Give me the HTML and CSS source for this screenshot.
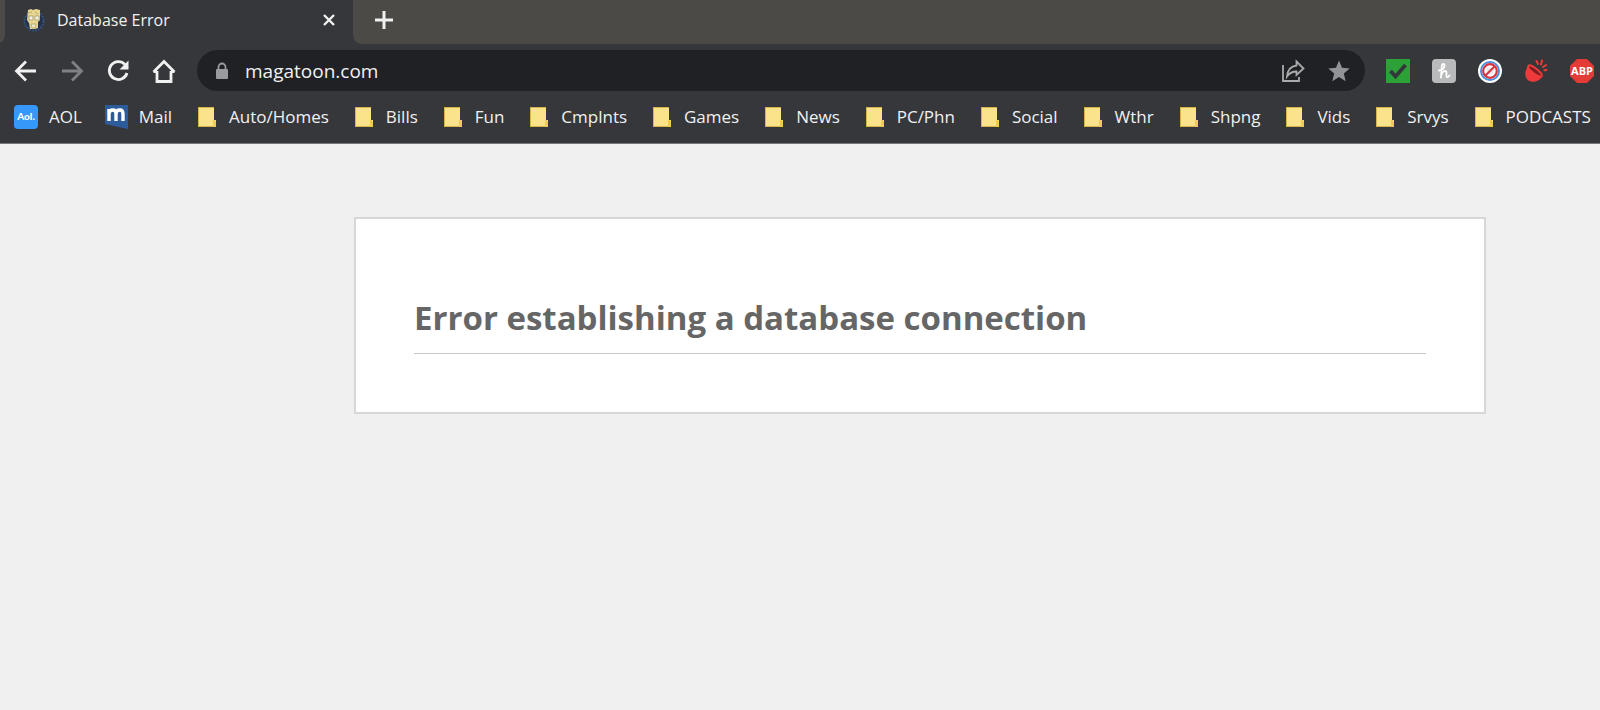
FILE: index.html
```html
<!DOCTYPE html>
<html lang="en">
<head>
  <meta charset="UTF-8">
  <meta name="viewport" content="width=device-width, initial-scale=1.0">
  <title>Database Error</title>
  <link rel="stylesheet" href="styles.css">
</head>
<body>
  <svg class="sprite" aria-hidden="true">
    <symbol id="folder" viewBox="0 0 24 24">
      <path d="M4 2h16v13h2v7H4z" fill="#fbe38c"/>
      <path d="M4 2h16v1H5v18h15v1H4z" fill="#d8b24a"/>
      <path d="M19 15h1q2 0 2 2v5h-3z" fill="#efcb55"/>
    </symbol>
  </svg>

  <header class="browser">
    <div class="tab-strip">
      <div class="tab">
        <svg class="favicon" viewBox="0 0 24 24" aria-hidden="true">
          <circle cx="12" cy="13" r="9.500" fill="#25324a" stroke="#34527f" stroke-width="2" stroke-dasharray="2 1"/>
          <path d="M6 2l3-1 2 1 3-1 4 1v10l-2 2v6l-3 1H8l-1-6-2-3z" fill="#e6d690"/>
          <path d="M7 8h4v4H7zM13 8h4v4h-4z" fill="#f5f1dc" stroke="#8b8464" stroke-width=".6"/>
          <path d="M9 16h5l-1 4h-3zM6 5l4-1M13 4l3 2" fill="#eee6ce" stroke="#a99b65" stroke-width=".7"/>
        </svg>
        <span class="tab-title">Database Error</span>
        <button class="tab-close" type="button" aria-label="Close tab">
          <svg viewBox="0 0 14 14"><path d="M2 2l10 10M12 2L2 12"/></svg>
        </button>
      </div>
      <button class="new-tab" type="button" aria-label="New tab">
        <svg viewBox="0 0 18 18"><path d="M9 0v18M0 9h18"/></svg>
      </button>
    </div>

    <div class="toolbar">
      <nav class="nav-buttons" aria-label="Browser navigation">
        <button type="button" aria-label="Back">
          <svg viewBox="0 0 24 24"><path d="M22 12H3M12 2.500L2.500 12l9.500 9.500"/></svg>
        </button>
        <button class="disabled" type="button" aria-label="Forward" disabled>
          <svg viewBox="0 0 24 24"><path d="M2 12H21M12 2.500l9.500 9.500-9.500 9.500"/></svg>
        </button>
        <button type="button" aria-label="Reload">
          <svg viewBox="0 0 24 24"><path d="M19 5.500A9 9 0 1 0 21 14"/><path class="solid" d="M22.500 1.500v9h-9z"/></svg>
        </button>
        <button type="button" aria-label="Home">
          <svg viewBox="0 0 24 24"><path d="M5 12v10.500h14V12M1.500 13L12 2.500 22.500 13M5 12.500H1.500M19 12.500h3.500"/></svg>
        </button>
      </nav>

      <div class="omnibox">
        <svg class="lock" viewBox="0 0 14 18" aria-hidden="true">
          <path d="M3.500 8V5a3.500 3.500 0 0 1 7 0v3" fill="none" stroke="#9a9b9e" stroke-width="1.800"/>
          <rect x="1" y="7" width="12" height="10" rx="1" fill="#9a9b9e"/>
        </svg>
        <input class="url" type="text" value="magatoon.com" aria-label="Address bar" spellcheck="false">
        <button type="button" aria-label="Share this page">
          <svg viewBox="0 0 24 24"><path class="share" d="M2 6v16h16v-4M15.500 2.500L22.500 9.500l-7 6.500V12.500q-6 0-9.500 5 1-10 9.500-11z"/></svg>
        </button>
        <button type="button" aria-label="Bookmark this page">
          <svg viewBox="0 0 24 24"><path class="star" d="M12 1.500l3 7.300 7.700.6-5.900 5.100 1.900 7.700-6.700-4.100-6.700 4.100 1.900-7.700-5.900-5.100 7.700-.6z"/></svg>
        </button>
      </div>

      <div class="extensions">
        <button type="button" aria-label="Site safety">
          <svg viewBox="0 0 24 24"><path d="M0 0h24v24H0z" fill="#2ba136"/><path d="M4.500 12l5 5.500L19.500 6" fill="none" stroke="#34373a" stroke-width="3.800"/></svg>
        </button>
        <button type="button" aria-label="Honey">
          <svg viewBox="0 0 24 24"><rect width="24" height="24" rx="4" fill="#b9babb"/><path d="M7 11.500q5.500-1 5.500-5 0-1.500-1.200-1.500-1.300 0-1.600 3L9 18.500M9.300 15.500q2-4 4-3.700 1.500.3 1.200 3.200t.5 3q1 .5 2.500-1.500" fill="none" stroke="#fff" stroke-width="1.800" stroke-linecap="round"/></svg>
        </button>
        <button type="button" aria-label="Popup blocker">
          <svg viewBox="0 0 24 24"><circle cx="12" cy="12" r="12" fill="#fff"/><circle cx="12" cy="12" r="9" fill="none" stroke="#4b8fd9" stroke-width="2"/><circle cx="12" cy="12" r="6.800" fill="none" stroke="#d73640" stroke-width="2.200"/><path d="M8.500 15.500V11q0-2.500 2.500-2.500h4.500V13q0 2.500-2.500 2.500z" fill="#e9e9ee"/><path d="M7.500 16.500l9-9" stroke="#d73640" stroke-width="2.200"/></svg>
        </button>
        <button type="button" aria-label="Coupons">
          <svg viewBox="0 0 24 24"><path d="M4 7Q0 13 2 18.500q3 5.500 9.500 4 5.500-1.500 6.500-6z" fill="#ee3a3a"/><ellipse cx="11" cy="12" rx="8.500" ry="2.600" transform="rotate(38 11 12)" fill="#7c1e22" stroke="#ee3a3a" stroke-width="1.800"/><path d="M12.500 2l1.500 3M18 1.500l-1 4M22 6l-3 2M22.500 11l-2 .3" stroke="#ee3a3a" stroke-width="2" stroke-linecap="round"/></svg>
        </button>
        <button type="button" aria-label="Adblock Plus">
          <svg viewBox="0 0 24 24"><path d="M7 0h10l7 7v10l-7 7H7l-7-7V7z" fill="#e33b36"/><text x="12" y="16" class="abp">ABP</text></svg>
        </button>
      </div>
    </div>

    <nav class="bookmarks" aria-label="Bookmarks">
      <a href="#"><svg viewBox="0 0 24 24"><rect width="24" height="24" rx="4" fill="#3699fa"/><text x="12" y="15" class="aol">Aol.</text></svg>AOL</a>
      <a href="#"><svg viewBox="0 0 24 24"><path d="M1 0h23v24L1 19z" fill="#2d5c9d"/><path d="M5 16V4M5 9q0-4 4-4 3 0 3 4v7M12 9q0-4 4-4 3 0 3 4v7" fill="none" stroke="#fff" stroke-width="3.400"/></svg>Mail</a>
      <a href="#"><svg><use href="#folder"/></svg>Auto/Homes</a>
      <a href="#"><svg><use href="#folder"/></svg>Bills</a>
      <a href="#"><svg><use href="#folder"/></svg>Fun</a>
      <a href="#"><svg><use href="#folder"/></svg>Cmplnts</a>
      <a href="#"><svg><use href="#folder"/></svg>Games</a>
      <a href="#"><svg><use href="#folder"/></svg>News</a>
      <a href="#"><svg><use href="#folder"/></svg>PC/Phn</a>
      <a href="#"><svg><use href="#folder"/></svg>Social</a>
      <a href="#"><svg><use href="#folder"/></svg>Wthr</a>
      <a href="#"><svg><use href="#folder"/></svg>Shpng</a>
      <a href="#"><svg><use href="#folder"/></svg>Vids</a>
      <a href="#"><svg><use href="#folder"/></svg>Srvys</a>
      <a href="#"><svg><use href="#folder"/></svg>PODCASTS</a>
    </nav>
  </header>

  <main class="error-page">
    <h1>Error establishing a database connection</h1>
  </main>
</body>
</html>
```
FILE: styles.css
```css
:root {
  --frame: #4b4a47;
  --toolbar: #36373a;
  --omnibox: #202124;
  --light: #f1f1f1;
  --page: #f0f0f0;
}

* {
  box-sizing: border-box;
}

body {
  margin: 0;
  background: var(--page);
  font-family: "Open Sans", "Segoe UI", sans-serif;
}

button {
  display: flex;
  align-items: center;
  justify-content: center;
  padding: 0;
  border: 0;
  background: none;
  color: var(--light);
  cursor: pointer;
}

svg {
  display: block;
  flex: none;
}

.sprite {
  display: none;
}

/* tab strip */
.browser {
  background: var(--toolbar);
  border-bottom: 1px solid #77787a;
}

.tab-strip {
  display: flex;
  height: 44px;
  padding-left: 5px;
  background: var(--frame);
}

.tab {
  position: relative;
  display: flex;
  align-items: center;
  width: 348px;
  height: 44px;
  padding: 0 17px 4px 17px;
  background: var(--toolbar);
}

/* curved feet of the active tab */
.tab::before,
.tab::after {
  content: "";
  position: absolute;
  bottom: 0;
  width: 8px;
  height: 8px;
}

.tab::before {
  right: 100%;
  background: radial-gradient(circle at 0 0, var(--frame) 7px, var(--toolbar) 8px);
}

.tab::after {
  left: 100%;
  background: radial-gradient(circle at 100% 0, var(--frame) 7px, var(--toolbar) 8px);
}

.favicon {
  width: 24px;
  height: 24px;
  margin-right: 11px;
}

.tab-title {
  flex: 1;
  color: var(--light);
  font-size: 16px;
}

.tab-close svg {
  width: 14px;
  height: 14px;
}

.new-tab {
  width: 62px;
  padding-bottom: 4px;
}

.new-tab svg {
  width: 18px;
  height: 18px;
}

.tab-close path,
.new-tab path {
  fill: none;
  stroke: currentColor;
  stroke-width: 2.4;
}

.new-tab path {
  stroke-width: 3;
}

/* toolbar */
.toolbar {
  display: flex;
  align-items: center;
  gap: 10px;
  padding: 6px 0 6px 3px;
}

.nav-buttons {
  display: flex;
}

.nav-buttons button {
  width: 46px;
  height: 41px;
}

.nav-buttons svg,
.omnibox button svg,
.extensions svg {
  width: 24px;
  height: 24px;
}

.nav-buttons path {
  fill: none;
  stroke: currentColor;
  stroke-width: 2.8;
}

.nav-buttons .solid {
  fill: currentColor;
  stroke: none;
}

.nav-buttons .disabled {
  color: #808184;
}

.omnibox {
  display: flex;
  flex: 1;
  align-items: center;
  height: 41px;
  padding: 0 3px 0 18px;
  border-radius: 21px;
  background: var(--omnibox);
}

.lock {
  width: 14px;
  height: 18px;
}

.url {
  flex: 1;
  min-width: 0;
  margin-left: 16px;
  padding: 0;
  border: 0;
  outline: 0;
  background: none;
  color: var(--light);
  font: 19px "Open Sans", "Segoe UI", sans-serif;
}

.omnibox button {
  width: 46px;
}

.share {
  fill: none;
  stroke: #a9aaac;
  stroke-width: 1.8;
}

.star {
  fill: #929396;
}

.extensions {
  display: flex;
  gap: 22px;
  padding: 0 6px 0 11px;
}

.abp {
  fill: #fff;
  font: bold 11px "Open Sans", sans-serif;
  text-anchor: middle;
}

/* bookmarks bar */
.bookmarks {
  display: flex;
  align-items: center;
  justify-content: space-between;
  padding: 7px 9px 14px 14px;
}

.bookmarks a {
  display: flex;
  align-items: center;
  gap: 11px;
  color: var(--light);
  font-size: 17px;
  line-height: 25px;
  text-decoration: none;
  white-space: nowrap;
}

.bookmarks svg {
  width: 24px;
  height: 24px;
}

.aol {
  fill: #fff;
  font: 900 10px Lato, sans-serif;
  text-anchor: middle;
}

/* error message */
.error-page {
  margin: 73px 114px 0 354px;
  padding: 76px 58px 58px;
  border: 2px solid #d7d7d7;
  background: #fff;
}

.error-page h1 {
  margin: 0;
  padding-bottom: 12px;
  border-bottom: 1px solid #c8c8c8;
  color: #666;
  font-size: 33px;
  line-height: 46px;
}
```
